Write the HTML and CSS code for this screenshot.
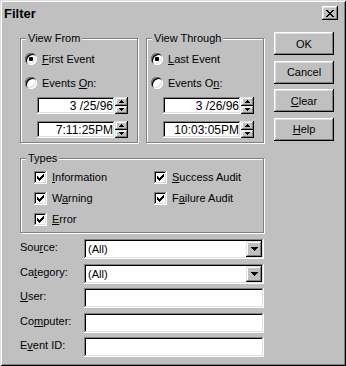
FILE: index.html
```html
<!DOCTYPE html>
<html>
<head>
<meta charset="utf-8">
<title>Filter</title>
<link rel="stylesheet" href="styles.css">
</head>
<body>
<div class="window">
  <div class="titlebar">
    <span class="title">Filter</span>
    <span class="close"><svg width="8" height="7" viewBox="0 0 8 7" shape-rendering="crispEdges"><path d="M0 0h2v1H0zM6 0h2v1H6zM1 1h2v1H1zM5 1h2v1H5zM2 2h4v1H2zM3 3h2v1H3zM2 4h4v1H2zM1 5h2v1H1zM5 5h2v1H5zM0 6h2v1H0zM6 6h2v1H6z" fill="#000"/></svg></span>
  </div>
  <div class="main">
    <div class="left">
      <div class="views">
        <div class="group view">
          <div class="group-title">View From</div>
          <div class="radio-row first"><span class="radio checked"></span><span><u>F</u>irst Event</span></div>
          <div class="radio-row"><span class="radio"></span><span>Events <u>O</u>n:</span></div>
          <div class="spin-field date">
            <div class="edit">3 /25/96</div>
            <div class="spinner">
              <span class="spin"><svg width="5" height="3" viewBox="0 0 5 3" shape-rendering="crispEdges"><path d="M2 0h1v1h1v1h1v1H0V2h1V1h1z" fill="#000"/></svg></span>
              <span class="spin"><svg width="5" height="3" viewBox="0 0 5 3" shape-rendering="crispEdges"><path d="M0 0h5v1H4v1H3v1H2V2H1V1H0z" fill="#000"/></svg></span>
            </div>
          </div>
          <div class="spin-field time">
            <div class="edit">7:11:25PM</div>
            <div class="spinner">
              <span class="spin"><svg width="5" height="3" viewBox="0 0 5 3" shape-rendering="crispEdges"><path d="M2 0h1v1h1v1h1v1H0V2h1V1h1z" fill="#000"/></svg></span>
              <span class="spin"><svg width="5" height="3" viewBox="0 0 5 3" shape-rendering="crispEdges"><path d="M0 0h5v1H4v1H3v1H2V2H1V1H0z" fill="#000"/></svg></span>
            </div>
          </div>
        </div>
        <div class="group view">
          <div class="group-title">View Through</div>
          <div class="radio-row first"><span class="radio checked"></span><span><u>L</u>ast Event</span></div>
          <div class="radio-row"><span class="radio"></span><span>Events O<u>n</u>:</span></div>
          <div class="spin-field date">
            <div class="edit">3 /26/96</div>
            <div class="spinner">
              <span class="spin"><svg width="5" height="3" viewBox="0 0 5 3" shape-rendering="crispEdges"><path d="M2 0h1v1h1v1h1v1H0V2h1V1h1z" fill="#000"/></svg></span>
              <span class="spin"><svg width="5" height="3" viewBox="0 0 5 3" shape-rendering="crispEdges"><path d="M0 0h5v1H4v1H3v1H2V2H1V1H0z" fill="#000"/></svg></span>
            </div>
          </div>
          <div class="spin-field time">
            <div class="edit">10:03:05PM</div>
            <div class="spinner">
              <span class="spin"><svg width="5" height="3" viewBox="0 0 5 3" shape-rendering="crispEdges"><path d="M2 0h1v1h1v1h1v1H0V2h1V1h1z" fill="#000"/></svg></span>
              <span class="spin"><svg width="5" height="3" viewBox="0 0 5 3" shape-rendering="crispEdges"><path d="M0 0h5v1H4v1H3v1H2V2H1V1H0z" fill="#000"/></svg></span>
            </div>
          </div>
        </div>
      </div>

      <div class="group types">
        <div class="group-title">Types</div>
        <div class="type-grid">
          <div class="check-row"><span class="check"><svg width="13" height="13" viewBox="0 0 13 13" shape-rendering="crispEdges"><path d="M3 5H4V6H5V7H6V6H7V5H8V4H9V3H10V6H9V7H8V8H7V9H6V10H5V9H4V8H3Z" fill="#000"/></svg></span><span><u>I</u>nformation</span></div>
          <div class="check-row"><span class="check"><svg width="13" height="13" viewBox="0 0 13 13" shape-rendering="crispEdges"><path d="M3 5H4V6H5V7H6V6H7V5H8V4H9V3H10V6H9V7H8V8H7V9H6V10H5V9H4V8H3Z" fill="#000"/></svg></span><span><u>S</u>uccess Audit</span></div>
          <div class="check-row"><span class="check"><svg width="13" height="13" viewBox="0 0 13 13" shape-rendering="crispEdges"><path d="M3 5H4V6H5V7H6V6H7V5H8V4H9V3H10V6H9V7H8V8H7V9H6V10H5V9H4V8H3Z" fill="#000"/></svg></span><span>W<u>a</u>rning</span></div>
          <div class="check-row"><span class="check"><svg width="13" height="13" viewBox="0 0 13 13" shape-rendering="crispEdges"><path d="M3 5H4V6H5V7H6V6H7V5H8V4H9V3H10V6H9V7H8V8H7V9H6V10H5V9H4V8H3Z" fill="#000"/></svg></span><span>F<u>a</u>ilure Audit</span></div>
          <div class="check-row"><span class="check"><svg width="13" height="13" viewBox="0 0 13 13" shape-rendering="crispEdges"><path d="M3 5H4V6H5V7H6V6H7V5H8V4H9V3H10V6H9V7H8V8H7V9H6V10H5V9H4V8H3Z" fill="#000"/></svg></span><span><u>E</u>rror</span></div>
        </div>
      </div>

      <div class="fields">
        <label class="field-label">Sou<u>r</u>ce:</label>
        <div class="combo"><span class="combo-text">(All)</span><span class="drop"><svg width="7" height="4" viewBox="0 0 7 4" shape-rendering="crispEdges"><path d="M0 0h7v1H6v1H5v1H4v1H3V3H2V2H1V1H0z" fill="#000"/></svg></span></div>
        <label class="field-label">Ca<u>t</u>egory:</label>
        <div class="combo"><span class="combo-text">(All)</span><span class="drop"><svg width="7" height="4" viewBox="0 0 7 4" shape-rendering="crispEdges"><path d="M0 0h7v1H6v1H5v1H4v1H3V3H2V2H1V1H0z" fill="#000"/></svg></span></div>
        <label class="field-label"><u>U</u>ser:</label>
        <div class="text-field"></div>
        <label class="field-label">Co<u>m</u>puter:</label>
        <div class="text-field"></div>
        <label class="field-label">E<u>v</u>ent ID:</label>
        <div class="text-field"></div>
      </div>
    </div>

    <div class="buttons">
      <div class="btn">OK</div>
      <div class="btn">Cancel</div>
      <div class="btn"><u>C</u>lear</div>
      <div class="btn"><u>H</u>elp</div>
    </div>
  </div>
</div>
</body>
</html>
```

FILE: styles.css
```css
* { box-sizing: border-box; }
html, body { margin: 0; padding: 0; background: #c0c0c0; }
body {
  font-family: "Liberation Sans", Arial, sans-serif;
  font-size: 11px;
  color: #000;
}
u { text-decoration: underline; text-underline-offset: 1px; }

.window {
  width: 346px;
  height: 366px;
  padding: 2px;
  background: #c0c0c0;
  box-shadow: inset 1px 1px #dfdfdf, inset -1px -1px #000, inset 2px 2px #fff, inset -2px -2px #808080;
}

.titlebar {
  height: 22px;
  display: flex;
  align-items: center;
  justify-content: space-between;
  padding: 0 6px 0 2px;
}
.title { font-weight: bold; font-size: 13px; }
.close {
  width: 16px;
  height: 14px;
  display: flex;
  align-items: center;
  justify-content: center;
  box-shadow: inset -1px -1px #000, inset 1px 1px #fff, inset -2px -2px #808080, inset 2px 2px #dfdfdf;
}
.close svg { display: block; }

.main {
  display: flex;
  gap: 10px;
  margin-top: 8px;
  padding-left: 18px;
}
.left { width: 244px; }

.views { display: flex; gap: 8px; margin-top: 6px; }

.group {
  border: 1px solid #808080;
  box-shadow: 1px 1px #fff, inset 1px 1px #fff;
}
.group-title {
  width: max-content;
  height: 13px;
  line-height: 13px;
  margin: -7px 0 0 5px;
  padding: 0 2px;
  background: #c0c0c0;
}

.view { width: 118px; height: 105px; }

.radio-row {
  display: flex;
  align-items: center;
  gap: 5px;
  height: 16px;
  margin: 8px 0 0 4px;
}
.radio-row.first { margin-top: 6px; }
.radio {
  position: relative;
  width: 12px;
  height: 12px;
  flex: none;
  border-radius: 50%;
  background: #fff;
  box-shadow: inset 1px 1px #808080, inset -1px -1px #fff, inset 2px 2px #000, inset -2px -2px #dfdfdf;
}
.radio.checked::after {
  content: "";
  position: absolute;
  left: 4px;
  top: 4px;
  width: 4px;
  height: 4px;
  border-radius: 1px;
  background: #000;
}

.spin-field {
  display: flex;
  height: 17px;
  margin-left: 16px;
}
.spin-field.date { margin-top: 6px; }
.spin-field.time { margin-top: 7px; }
.edit {
  width: 78px;
  height: 100%;
  display: flex;
  align-items: center;
  justify-content: flex-end;
  padding-right: 2px;
  font-size: 12px;
  white-space: pre;
  background: #fff;
  box-shadow: inset -1px -1px #fff, inset 1px 1px #808080, inset -2px -2px #dfdfdf, inset 2px 2px #000;
}
.spinner {
  width: 13px;
  display: flex;
  flex-direction: column;
}
.spin {
  flex: 1;
  display: flex;
  align-items: center;
  justify-content: center;
  box-shadow: inset -1px -1px #000, inset 1px 1px #dfdfdf, inset -2px -2px #808080, inset 2px 2px #fff;
}
.spin svg { display: block; }

.types { margin-top: 15px; height: 75px; }
.type-grid {
  display: grid;
  grid-template-columns: 120px 1fr;
  grid-auto-rows: 16px;
  row-gap: 5px;
  margin: 4px 0 0 13px;
}
.check-row { display: flex; align-items: center; gap: 5px; }
.check {
  width: 13px;
  height: 13px;
  flex: none;
  background: #fff;
  box-shadow: inset -1px -1px #fff, inset 1px 1px #808080, inset -2px -2px #dfdfdf, inset 2px 2px #000;
}
.check svg { display: block; }

.fields {
  display: grid;
  grid-template-columns: 64px 180px;
  grid-auto-rows: 20px;
  row-gap: 4.5px;
  margin-top: 6px;
}
.field-label {
  display: flex;
  align-items: center;
  padding-bottom: 4px;
}
.combo, .text-field {
  height: 20px;
  padding: 2px;
  background: #fff;
  box-shadow: inset -1px -1px #fff, inset 1px 1px #808080, inset -2px -2px #dfdfdf, inset 2px 2px #000;
}
.combo { display: flex; align-items: center; }
.combo-text { padding-left: 2px; flex: 1; }
.drop {
  width: 16px;
  height: 16px;
  display: flex;
  align-items: center;
  justify-content: center;
  background: #c0c0c0;
  box-shadow: inset -1px -1px #000, inset 1px 1px #dfdfdf, inset -2px -2px #808080, inset 2px 2px #fff;
}
.drop svg { display: block; }

.buttons {
  width: 60px;
  display: flex;
  flex-direction: column;
  gap: 5.5px;
}
.btn {
  height: 23px;
  display: flex;
  align-items: center;
  justify-content: center;
  box-shadow: inset -1px -1px #000, inset 1px 1px #fff, inset -2px -2px #808080, inset 2px 2px #dfdfdf;
}
```
